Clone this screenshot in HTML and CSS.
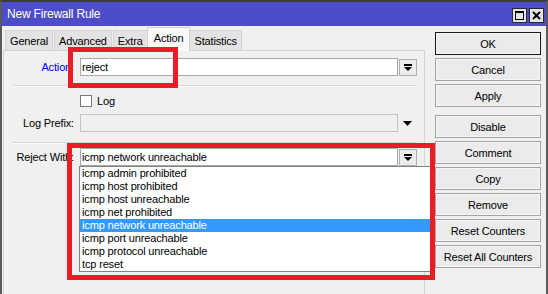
FILE: index.html
```html
<!DOCTYPE html>
<html>
<head>
<meta charset="utf-8">
<link rel="stylesheet" href="styles.css">
</head>
<body>
<div class="window">
  <div class="titlebar">
    <span class="title">New Firewall Rule</span>
    <div class="tb-btns">
      <span class="tb-btn"><svg width="13" height="13" viewBox="0 0 13 13"><rect x="2.5" y="2.5" width="8" height="8" fill="none" stroke="#000" stroke-width="1"/><rect x="2" y="2" width="9" height="2" fill="#000"/></svg></span>
      <span class="tb-btn"><svg width="13" height="13" viewBox="0 0 13 13"><path d="M3 3 L10 10 M10 3 L3 10" stroke="#000" stroke-width="2"/></svg></span>
    </div>
  </div>
  <div class="body">
    <div class="main">
      <div class="tabs">
        <span class="tab">General</span>
        <span class="tab">Advanced</span>
        <span class="tab">Extra</span>
        <span class="tab active">Action</span>
        <span class="tab">Statistics</span>
      </div>
      <div class="panel">
        <div class="row">
          <span class="lbl blue">Action:</span>
          <div class="combo">
            <div class="field">reject</div>
            <div class="dd-btn"><svg width="8" height="7" viewBox="0 0 8 7"><rect x="0" y="0" width="8" height="2" fill="#000"/><path d="M0 3 H8 L4 7 Z" fill="#000"/></svg></div>
          </div>
        </div>
        <div class="sep sep1"></div>
        <div class="row check-row">
          <span class="lbl"></span>
          <span class="check"><span class="box"></span>Log</span>
        </div>
        <div class="row prefix-row">
          <span class="lbl">Log Prefix:</span>
          <div class="combo">
            <div class="field disabled"></div>
            <div class="dd-plain"><svg width="9" height="5" viewBox="0 0 9 5"><path d="M0 0 H9 L4.5 5 Z" fill="#000"/></svg></div>
          </div>
        </div>
        <div class="sep sep2"></div>
        <div class="row reject-row">
          <span class="lbl">Reject With:</span>
          <div class="combo">
            <div class="field">icmp network unreachable</div>
            <div class="dd-btn"><svg width="8" height="7" viewBox="0 0 8 7"><rect x="0" y="0" width="8" height="2" fill="#000"/><path d="M0 3 H8 L4 7 Z" fill="#000"/></svg></div>
          </div>
          <ul class="list">
            <li>icmp admin prohibited</li>
            <li>icmp host prohibited</li>
            <li>icmp host unreachable</li>
            <li>icmp net prohibited</li>
            <li class="sel">icmp network unreachable</li>
            <li>icmp port unreachable</li>
            <li>icmp protocol unreachable</li>
            <li>tcp reset</li>
          </ul>
        </div>
      </div>
    </div>
    <div class="buttons">
      <span class="btn default">OK</span>
      <span class="btn">Cancel</span>
      <span class="btn">Apply</span>
      <span class="btn gap">Disable</span>
      <span class="btn">Comment</span>
      <span class="btn">Copy</span>
      <span class="btn">Remove</span>
      <span class="btn">Reset Counters</span>
      <span class="btn">Reset All Counters</span>
    </div>
  </div>
  <div class="annot annot-action"></div>
  <div class="annot annot-reject"></div>
</div>
</body>
</html>
```

FILE: styles.css
```css
* { box-sizing: border-box; }
html, body { margin: 0; padding: 0; }
body {
  width: 548px;
  height: 294px;
  overflow: hidden;
  background: #f0f0f0;
  font-family: "Liberation Sans", Arial, sans-serif;
  font-size: 11px;
  letter-spacing: -0.15px;
  color: #000;
}
.window {
  position: relative;
  width: 548px;
  height: 294px;
  background: #f0f0f0;
  border-top: 2px solid #3c3c3c;
  border-left: 2px solid #5a5a5a;
  border-right: 2px solid #5a5a5a;
  overflow: hidden;
}
.titlebar {
  height: 24px;
  background: #4d4dc9;
  display: flex;
  align-items: center;
  justify-content: space-between;
  padding: 0 2px 0 5px;
  color: #fff;
}
.title { font-size: 12px; letter-spacing: -0.2px; }
.tb-btns { display: flex; gap: 2px; margin-top: 2px; }
.tb-btn {
  width: 15px;
  height: 15px;
  border: 1px solid #2a2a2a;
  background: #e4e4e4;
  display: flex;
  align-items: center;
  justify-content: center;
}
.body {
  display: flex;
  padding: 0 4px 0 1px;
}
.main { width: 422px; }
.tabs {
  height: 24px;
  display: flex;
  align-items: flex-end;
  padding-left: 2px;
}
.tab {
  height: 20px;
  padding: 4px 4px 0;
  border: 1px solid #d4d4d4;
  border-bottom: none;
  background: #e3e3e3;
  margin-right: 1px;
  white-space: nowrap;
}
.tab.active {
  height: 24px;
  padding: 4px 6px 0;
  margin: 0 -1px -1px -2px;
  background: #f9f9f9;
  position: relative;
  z-index: 1;
}
.panel {
  height: 260px;
  border: 1px solid #d4d4d4;
  border-bottom: none;
  padding: 7px 7px 0 0;
}
.row {
  display: flex;
  align-items: center;
  position: relative;
}
.lbl {
  width: 70px;
  margin-right: 6px;
  text-align: right;
  white-space: nowrap;
  color: #000;
}
.lbl.blue { color: #0000ff; }
.combo { flex: 1; display: flex; height: 18px; }
.field {
  flex: 1;
  height: 18px;
  background: #fff;
  border: 1px solid #a9a9a9;
  padding: 2px 0 0 1px;
  white-space: nowrap;
}
.field.disabled { background: #f0f0f0; border-color: #c4c4c4; }
.dd-btn {
  width: 18px;
  height: 17px;
  margin-top: 1px;
  margin-left: 1px;
  background: #ececec;
  border: 1px solid #b0b0b0;
  display: flex;
  align-items: center;
  justify-content: center;
}
.dd-plain {
  width: 19px;
  display: flex;
  align-items: center;
  justify-content: center;
}
.sep {
  height: 2px;
  margin-left: 8px;
  margin-right: 0;
  border-top: 1px solid #d6d6d6;
  border-bottom: 1px solid #fbfbfb;
}
.sep1 { margin-top: 9px; }
.check-row { margin-top: 8px; height: 12px; }
.check { display: flex; align-items: center; gap: 5px; }
.box {
  width: 12px;
  height: 12px;
  background: #fff;
  border: 1px solid #7a7a7a;
}
.prefix-row { margin-top: 7px; }
.sep2 { margin-top: 10px; }
.reject-row { margin-top: 4px; }
.list {
  position: absolute;
  left: 75px;
  top: 18px;
  width: 353px;
  margin: 0;
  padding: 0;
  list-style: none;
  background: #fff;
  border: 1px solid #828282;
  z-index: 2;
}
.list li {
  height: 13px;
  line-height: 13px;
  padding-left: 2px;
  white-space: nowrap;
}
.list li.sel { background: #3399ff; color: #fff; }
.buttons {
  margin-left: 10px;
  margin-top: 6px;
  width: 106px;
  display: flex;
  flex-direction: column;
  gap: 3px;
}
.btn {
  height: 23px;
  border: 1px solid #a3a3a3;
  box-shadow: inset 0 0 0 1px #f6f6f6;
  background: #ebebeb;
  display: flex;
  align-items: center;
  justify-content: center;
  white-space: nowrap;
}
.btn.default { border-color: #1a1a1a; }
.btn.gap { margin-top: 5px; }
.annot {
  position: absolute;
  border: 5px solid #ed1c24;
  z-index: 5;
}
.annot-action { left: 66px; top: 45px; width: 110px; height: 41px; }
.annot-reject { left: 65px; top: 141px; width: 368px; height: 137px; }
```
